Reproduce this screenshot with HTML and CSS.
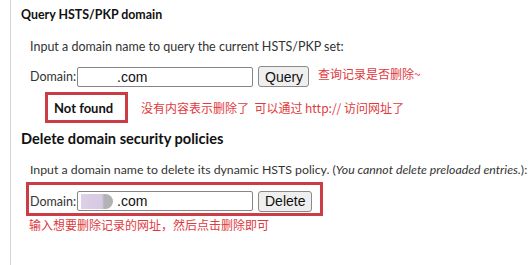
FILE: index.html
```html
<!DOCTYPE html>
<html>
<head>
<meta charset="utf-8">
<link rel="stylesheet" href="styles.css">
</head>
<body>
<div class="panel">
  <h2 class="title">Query HSTS/PKP domain</h2>
  <div class="body">
    <p class="desc">Input a domain name to query the current HSTS/PKP set:</p>
    <div class="row">
      <span class="label">Domain:</span>
      <div class="field"><span class="val val-plain">.com</span></div>
      <button class="btn btn-query">Query</button>
      <span class="note note-query">查询记录是否删除~</span>
    </div>
    <div class="result">
      <div class="found-box">Not found</div>
      <span class="note note-result">没有内容表示删除了&nbsp; 可以通过 http:// 访问网址了</span>
    </div>
  </div>
  <h2 class="title title-delete">Delete domain security policies</h2>
  <div class="body">
    <p class="desc desc-delete">Input a domain name to delete its dynamic HSTS policy. (<em>You cannot delete preloaded entries.</em>):</p>
    <div class="delete-box">
      <div class="row row-delete">
        <span class="label">Domain:</span>
        <div class="field"><span class="blob"></span><span class="val">.com</span></div>
        <button class="btn btn-delete">Delete</button>
      </div>
    </div>
    <p class="note note-delete">输入想要删除记录的网址，然后点击删除即可</p>
  </div>
</div>
</body>
</html>
```

FILE: styles.css
```css
html, body {
  margin: 0;
  padding: 0;
  background: #ffffff;
}
body {
  font-family: Lato, "Noto Sans", sans-serif;
  font-size: 12.5px;
  color: #222222;
  width: 528px;
  height: 265px;
  overflow: hidden;
}
.panel {
  margin-left: 10px;
  border-left: 1px solid #d4d4d4;
  padding-left: 10px;
  height: 265px;
  box-sizing: border-box;
}
.title {
  margin: 0;
  padding-top: 6px;
  font-size: 12.4px;
  line-height: 18px;
  font-weight: bold;
  color: #111111;
}
.title-delete {
  padding-top: 0;
  margin-top: 7px;
  font-size: 14.6px;
}
.body {
  padding-left: 9px;
}
.desc {
  margin: 14px 0 0 0;
  line-height: 18px;
  color: #333333;
  white-space: nowrap;
}
.desc-delete {
  margin-top: 13px;
  font-size: 12.3px;
}
.desc em {
  font-style: italic;
}
.row {
  display: flex;
  align-items: center;
  height: 21px;
  margin-top: 10px;
}
.label {
  color: #333333;
  width: 47px;
}
.field {
  display: flex;
  align-items: center;
  width: 176px;
  height: 20px;
  box-sizing: border-box;
  border: 1px solid #858585;
  border-radius: 2px;
  background: #ffffff;
  font-family: "Liberation Sans", Arial, sans-serif;
  font-size: 14px;
  color: #111111;
}
.val-plain {
  margin-left: 39px;
}
.blob {
  display: inline-block;
  width: 32px;
  height: 15px;
  margin-left: 3px;
  border-radius: 0 8px 8px 0;
  background: linear-gradient(to right, #dcd0e6 0, #d6c9e2 66%, #b4b2b6 72%, #b0b0b0 100%);
}
.blob + .val {
  margin-left: 4px;
}
.btn {
  margin-left: 5px;
  height: 21px;
  padding: 0 6px;
  font-family: "Liberation Sans", Arial, sans-serif;
  font-size: 14px;
  color: #111111;
  background: #efefef;
  border: 1px solid #8a8a8a;
  border-radius: 3px;
}
.btn-query {
  width: 51px;
}
.btn-delete {
  width: 54px;
}
.note {
  font-family: "Noto Sans CJK SC", "Noto Sans", sans-serif;
  font-size: 12px;
  color: #e0393e;
  white-space: nowrap;
}
.note-query {
  margin-left: 9px;
  margin-top: -6px;
}
.result {
  display: flex;
  align-items: center;
  margin-top: 5px;
}
.found-box {
  margin-left: 15px;
  width: 83px;
  height: 31px;
  box-sizing: border-box;
  border: 3px solid #cc3c44;
  display: flex;
  align-items: center;
  padding-left: 6px;
  font-weight: bold;
  font-size: 13px;
  color: #111111;
}
.note-result {
  margin-left: 13px;
}
.delete-box {
  margin: 3px 0 0 -4px;
  width: 297px;
  height: 34px;
  box-sizing: border-box;
  border: 3px solid #cc3c44;
  padding: 5px 0 1px 1px;
}
.row-delete {
  margin-top: 0;
  height: 22px;
}
.note-delete {
  margin: 1px 0 0 -1px;
  line-height: 16px;
}
```
